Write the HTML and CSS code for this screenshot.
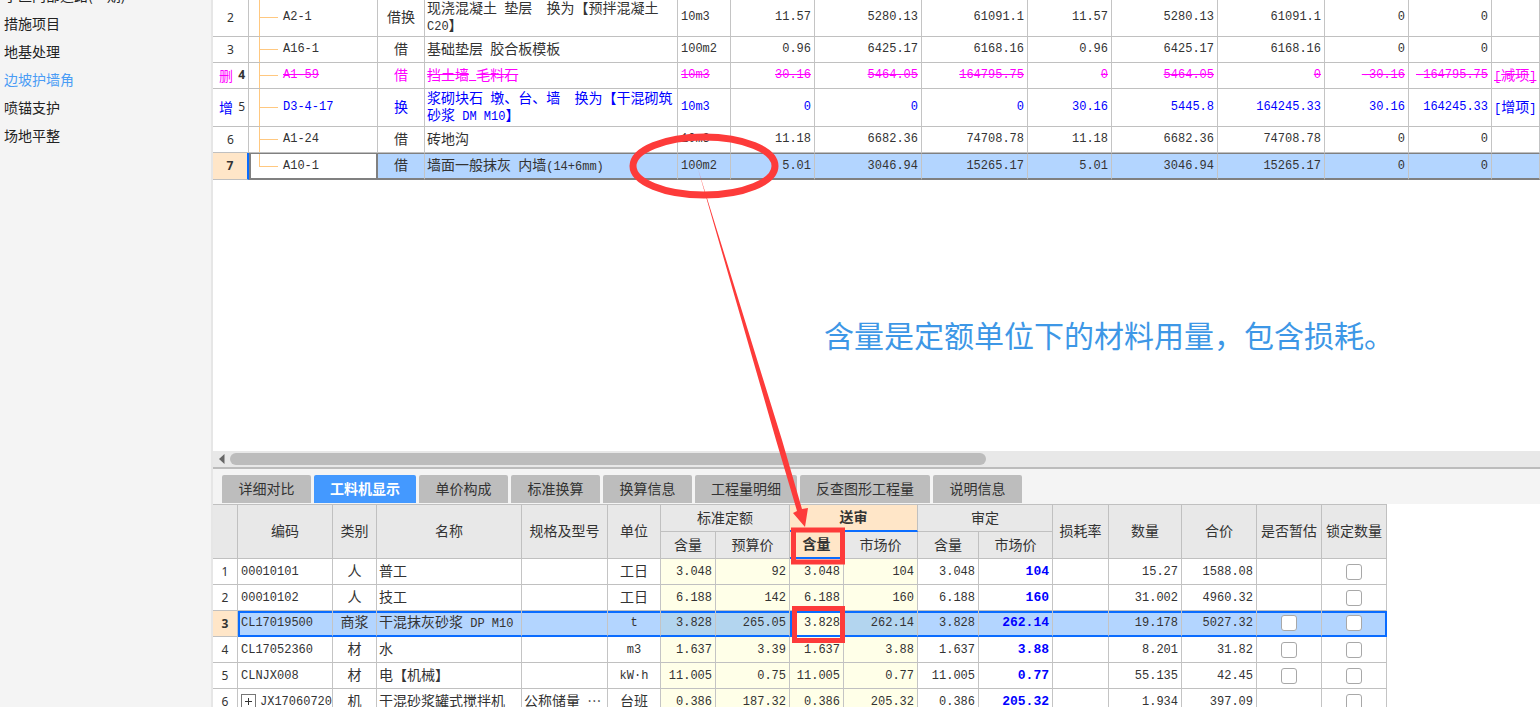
FILE: index.html
```html
<!DOCTYPE html>
<html lang="zh-CN">
<head>
<meta charset="utf-8">
<title>工料机显示</title>
<link rel="stylesheet" href="styles.css">
</head>
<body>
<div class="app">
  <nav class="sidebar">
    <a href="#">小区内部道路(一期)</a>
    <a href="#">措施项目</a>
    <a href="#">地基处理</a>
    <a href="#" class="current">边坡护墙角</a>
    <a href="#">喷锚支护</a>
    <a href="#">场地平整</a>
  </nav>
  <main class="main">
    <section class="upper">
      <table class="grid items">
        <colgroup><col class="w36"><col class="w129"><col class="w47"><col class="w253"><col class="w53"><col class="w84"><col class="w107"><col class="w106"><col class="w84"><col class="w106"><col class="w107"><col class="w84"><col class="w83"><col></colgroup>
        <tbody>
          <tr class="tall"><td class="idx">2</td><td class="code">A2-1</td><td class="cn mid">借换</td><td class="cn">现浇混凝土<i> </i>垫层<i>&nbsp; </i>换为【预拌混凝土 <i>C20</i>】</td><td>10m3</td><td class="r">11.57</td><td class="r">5280.13</td><td class="r">61091.1</td><td class="r">11.57</td><td class="r">5280.13</td><td class="r">61091.1</td><td class="r">0</td><td class="r">0</td><td></td></tr>
          <tr><td class="idx">3</td><td class="code">A16-1</td><td class="cn mid">借</td><td class="cn">基础垫层<i> </i>胶合板模板</td><td>100m2</td><td class="r">0.96</td><td class="r">6425.17</td><td class="r">6168.16</td><td class="r">0.96</td><td class="r">6425.17</td><td class="r">6168.16</td><td class="r">0</td><td class="r">0</td><td></td></tr>
          <tr class="removed"><td class="idx"><span class="mark"><span class="cn">删</span><b>4</b></span></td><td class="code">A1-59</td><td class="cn mid keep">借</td><td class="cn">挡土墙<i> </i>毛料石</td><td>10m3</td><td class="r">30.16</td><td class="r">5464.05</td><td class="r">164795.75</td><td class="r">0</td><td class="r">5464.05</td><td class="r">0</td><td class="r">-30.16</td><td class="r">-164795.75</td><td class="cn"><i>[</i>减项<i>]</i></td></tr>
          <tr class="tall added"><td class="idx"><span class="mark"><span class="cn">增</span><span>5</span></span></td><td class="code">D3-4-17</td><td class="cn mid">换</td><td class="cn">浆砌块石<i> </i>墩、台、墙<i>&nbsp; </i>换为【干混砌筑砂浆<i> DM M10</i>】</td><td>10m3</td><td class="r">0</td><td class="r">0</td><td class="r">0</td><td class="r">30.16</td><td class="r">5445.8</td><td class="r">164245.33</td><td class="r">30.16</td><td class="r">164245.33</td><td class="cn"><i>[</i>增项<i>]</i></td></tr>
          <tr><td class="idx">6</td><td class="code">A1-24</td><td class="cn mid">借</td><td class="cn">砖地沟</td><td>10m3</td><td class="r">11.18</td><td class="r">6682.36</td><td class="r">74708.78</td><td class="r">11.18</td><td class="r">6682.36</td><td class="r">74708.78</td><td class="r">0</td><td class="r">0</td><td></td></tr>
          <tr class="picked"><td class="idx">7</td><td class="code last">A10-1</td><td class="cn mid">借</td><td class="cn">墙面一般抹灰<i> </i>内墙<i>(14+6mm)</i></td><td>100m2</td><td class="r">5.01</td><td class="r">3046.94</td><td class="r">15265.17</td><td class="r">5.01</td><td class="r">3046.94</td><td class="r">15265.17</td><td class="r">0</td><td class="r">0</td><td></td></tr>
        </tbody>
      </table>
    </section>
    <section class="lower">
      <div class="scrollbar">
        <svg width="6" height="10" viewBox="0 0 6 10"><path d="M5.500 0v10L0 5z" fill="#666"/></svg>
        <div class="track"><div class="thumb"></div></div>
      </div>
      <div class="tabs">
        <button>详细对比</button><button class="active wide">工料机显示</button><button>单价构成</button><button>标准换算</button><button>换算信息</button><button class="wide">工程量明细</button><button class="wider">反查图形工程量</button><button>说明信息</button>
      </div>
      <div class="detail">
        <table class="grid parts">
          <colgroup><col class="w25"><col class="w95"><col class="w44"><col class="w145"><col class="w86"><col class="w53"><col class="w55"><col class="w74"><col class="w54"><col class="w74"><col class="w61"><col class="w74"><col class="w56"><col class="w73"><col class="w75"><col class="w65"><col class="w65"></colgroup>
          <thead>
            <tr><th rowspan="2"></th><th rowspan="2">编码</th><th rowspan="2">类别</th><th rowspan="2">名称</th><th rowspan="2">规格及型号</th><th rowspan="2">单位</th><th colspan="2">标准定额</th><th colspan="2" class="hot">送审</th><th colspan="2">审定</th><th rowspan="2">损耗率</th><th rowspan="2">数量</th><th rowspan="2">合价</th><th rowspan="2">是否暂估</th><th rowspan="2">锁定数量</th></tr>
            <tr><th>含量</th><th>预算价</th><th class="hot">含量</th><th>市场价</th><th>含量</th><th>市场价</th></tr>
          </thead>
          <tbody>
            <tr><td class="idx">1</td><td>00010101</td><td class="cn mid">人</td><td class="cn">普工</td><td></td><td class="cn mid">工日</td><td class="r y">3.048</td><td class="r y">92</td><td class="r y">3.048</td><td class="r y">104</td><td class="r">3.048</td><td class="r price">104</td><td></td><td class="r">15.27</td><td class="r">1588.08</td><td></td><td class="mid"><input type="checkbox" aria-label="锁定数量"></td></tr>
            <tr><td class="idx">2</td><td>00010102</td><td class="cn mid">人</td><td class="cn">技工</td><td></td><td class="cn mid">工日</td><td class="r y">6.188</td><td class="r y">142</td><td class="r y">6.188</td><td class="r y">160</td><td class="r">6.188</td><td class="r price">160</td><td></td><td class="r">31.002</td><td class="r">4960.32</td><td></td><td class="mid"><input type="checkbox" aria-label="锁定数量"></td></tr>
            <tr class="chosen"><td class="idx">3</td><td class="first">CL17019500</td><td class="cn mid">商浆</td><td class="cn">干混抹灰砂浆<i> DP M10</i></td><td></td><td class="mid">t</td><td class="r y">3.828</td><td class="r y">265.05</td><td class="r focus">3.828</td><td class="r y">262.14</td><td class="r">3.828</td><td class="r price">262.14</td><td></td><td class="r">19.178</td><td class="r">5027.32</td><td class="mid"><input type="checkbox" aria-label="是否暂估"></td><td class="mid end"><input type="checkbox" aria-label="锁定数量"></td></tr>
            <tr><td class="idx">4</td><td>CL17052360</td><td class="cn mid">材</td><td class="cn">水</td><td></td><td class="mid">m3</td><td class="r y">1.637</td><td class="r y">3.39</td><td class="r y">1.637</td><td class="r y">3.88</td><td class="r">1.637</td><td class="r price">3.88</td><td></td><td class="r">8.201</td><td class="r">31.82</td><td class="mid"><input type="checkbox" aria-label="是否暂估"></td><td class="mid"><input type="checkbox" aria-label="锁定数量"></td></tr>
            <tr><td class="idx">5</td><td>CLNJX008</td><td class="cn mid">材</td><td class="cn">电【机械】</td><td></td><td class="mid">kW·h</td><td class="r y">11.005</td><td class="r y">0.75</td><td class="r y">11.005</td><td class="r y">0.77</td><td class="r">11.005</td><td class="r price">0.77</td><td></td><td class="r">55.135</td><td class="r">42.45</td><td class="mid"><input type="checkbox" aria-label="是否暂估"></td><td class="mid"><input type="checkbox" aria-label="锁定数量"></td></tr>
            <tr><td class="idx">6</td><td><span class="branch"><button class="expand" aria-label="展开"><svg width="13" height="13" viewBox="0 0 13 13"><path d="M3 6.500h7M6.500 3v7" stroke="#333"/></svg></button><span>JX17060720</span></span></td><td class="cn mid">机</td><td class="cn">干混砂浆罐式搅拌机</td><td class="cn">公称储量<i> </i>…</td><td class="cn mid">台班</td><td class="r y">0.386</td><td class="r y">187.32</td><td class="r y">0.386</td><td class="r y">205.32</td><td class="r">0.386</td><td class="r price">205.32</td><td></td><td class="r">1.934</td><td class="r">397.09</td><td></td><td class="mid"><input type="checkbox" aria-label="锁定数量"></td></tr>
          </tbody>
        </table>
      </div>
    </section>
  </main>
  <svg class="marks" width="1540" height="707" viewBox="0 0 1540 707">
    <g fill="none" stroke="#fd3b3a">
      <ellipse cx="704" cy="166" rx="71" ry="29" stroke-width="7"/>
      <rect x="793.500" y="530" width="49" height="32" stroke-width="5"/>
      <rect x="794.500" y="608.500" width="48" height="32" stroke-width="5"/>
    </g>
    <path d="M698 169L782 440L802 509L808 508L805 527L793 513L797 511L776 440Z" fill="#fd3b3a"/>
  </svg>
  <p class="note">含量是定额单位下的材料用量，包含损耗。</p>
</div>
</body>
</html>
```
FILE: styles.css
```css
* { box-sizing: border-box; }
body { margin: 0; background: #fff; color: #333; font-family: "Noto Sans CJK SC", sans-serif; font-size: 14px; }
.app { position: relative; display: flex; height: 100vh; overflow: hidden; }

.sidebar { flex: 0 0 213px; background: #f4f4f4; border-right: 2px solid #e6e6e6; overflow: hidden; }
.sidebar a { display: block; height: 28px; padding-left: 4px; line-height: 26px; color: #222; text-decoration: none; }
.sidebar a:first-child { margin-top: -18px; }
.sidebar .current { color: #4a9cf5; }

.main { flex: 1; min-width: 0; display: flex; flex-direction: column; }
.upper { flex: 1; min-height: 0; overflow: hidden; }
.lower { flex: 0 0 256px; overflow: hidden; }

.grid { table-layout: fixed; border-collapse: separate; border-spacing: 0; }
.grid td { height: 26px; padding: 0 3px; border-right: 1px solid #c4c4c4; border-bottom: 1px solid #c0c0c0; font: 12px/16px "Liberation Mono", "Noto Sans CJK SC", monospace; white-space: nowrap; overflow: hidden; }
.grid .cn { font: 14px/17px "Noto Sans CJK SC", sans-serif; }
.grid td.cn { padding: 0 2px 3px; }
.grid i { font: 12px/8px "Liberation Mono", monospace; white-space: pre-wrap; }
.grid .mid { text-align: center; }
.grid .r { text-align: right; }
.grid .idx { padding: 0; text-align: center; font: 12px/16px "Noto Sans", sans-serif; }

.items { width: 100%; margin-top: -1px; }
.items td { padding-bottom: 1px; }
.items .tall td { height: 38px; }
.items .tall td.cn { white-space: normal; }
.items .code { padding-left: 34px; background: linear-gradient(#ffc880, #ffc880) 10px 0 / 1px 100% no-repeat, linear-gradient(#ffc880, #ffc880) 10px 12px / 19px 1px no-repeat; }
.items .tall .code { background-position: 10px 0, 10px 18px; }
.items .code.last { background: linear-gradient(#ffc880, #ffc880) 8px 0 / 1px 12px no-repeat, linear-gradient(#ffc880, #ffc880) 8px 12px / 19px 1px no-repeat, #fff; }
.mark { display: flex; justify-content: space-between; padding: 0 3px 0 6px; }
.removed td { color: #f0f; text-decoration: line-through; }
.removed .idx, .removed .keep { text-decoration: none; }
.removed b { color: #333; }
.added td { color: #00f; }
.added .mark span:last-child { color: #333; }
.items .picked td { height: 27px; background-color: #b3d5ff; border-bottom: 2px solid #808080; border-top: 1px solid #808080; }
.items .picked .idx { background-color: #ffe6c8; border-right: 2px solid #0a6cff; border-top: 0; border-bottom: 1px solid #c0c0c0; font-weight: bold; }
.items .picked .code { padding-left: 32px; background-color: #fff; border-left: 2px solid #808080; border-right: 2px solid #808080; }

.scrollbar { display: flex; align-items: center; gap: 5px; height: 18px; padding: 0 6px; background: #e8e8e8; border-bottom: 2px solid #bcbcbc; }
.track { flex: 1; }
.thumb { width: 58%; height: 12px; border-radius: 6px; background: #bcbcbc; }
.tabs { display: flex; align-items: flex-end; gap: 3px; height: 35px; padding: 0 0 1px 9px; background: #f4f4f4; }
.tabs button { width: 89px; height: 28px; padding: 0 0 2px; border: 0; border-radius: 2px 2px 0 0; background: #bdbdbd; color: #333; font: 14px/26px "Noto Sans CJK SC", sans-serif; }
.tabs .wide { width: 102px; }
.tabs .wider { width: 130px; }
.tabs .active { background: #4499ff; color: #fff; font-weight: bold; }

.parts { width: 1174px; border-top: 1px solid #c0c0c0; }
.parts th { height: 27px; padding: 0 0 3px; background: #e8e8e8; border-right: 1px solid #c0c0c0; border-bottom: 1px solid #c0c0c0; font-size: 14px; line-height: 20px; font-weight: normal; white-space: nowrap; }
.parts .hot { background: #ffe6c8; border-bottom: 2px solid #0a6cff; font-weight: bold; }
.parts td.y { background: #ffffe8; }
.parts td.price { color: #00f; font-size: 13px; font-weight: bold; }
.parts .chosen td { background: #b3d5ff; border-bottom: 2px solid #0a6cff; box-shadow: inset 0 2px #0a6cff; }
.parts .chosen td.y { background: #b3d5ef; }
.parts .chosen td.focus { background: #ffffe8; border-left: 2px solid #0a6cff; }
.parts .chosen .first { padding-left: 1px; border-left: 2px solid #0a6cff; }
.parts .chosen .end { border-right: 2px solid #0a6cff; }
.parts .chosen td.idx { background: #ffe6c8; border-bottom: 1px solid #c0c0c0; box-shadow: none; font-weight: bold; }
.parts input { appearance: none; display: block; width: 16px; height: 16px; margin: 0 auto; border: 1px solid #a8a8a8; border-radius: 3px; background: #fff; }
.branch { display: flex; align-items: center; gap: 4px; }
.expand { display: flex; flex: none; width: 15px; height: 15px; padding: 0; border: 1px solid #777; background: #fff; }

.marks { position: absolute; left: 0; top: 0; pointer-events: none; }
.note { position: absolute; left: 824px; top: 313px; margin: 0; color: #3d97e6; font-size: 30px; line-height: 42px; white-space: nowrap; }

.w25 { width: 25px; } .w36 { width: 36px; } .w44 { width: 44px; } .w47 { width: 47px; }
.w53 { width: 53px; } .w54 { width: 54px; } .w55 { width: 55px; } .w56 { width: 56px; }
.w61 { width: 61px; } .w65 { width: 65px; } .w73 { width: 73px; } .w74 { width: 74px; }
.w75 { width: 75px; } .w83 { width: 83px; } .w84 { width: 84px; } .w86 { width: 86px; }
.w95 { width: 95px; } .w106 { width: 106px; } .w107 { width: 107px; } .w129 { width: 129px; }
.w145 { width: 145px; } .w253 { width: 253px; }
```
